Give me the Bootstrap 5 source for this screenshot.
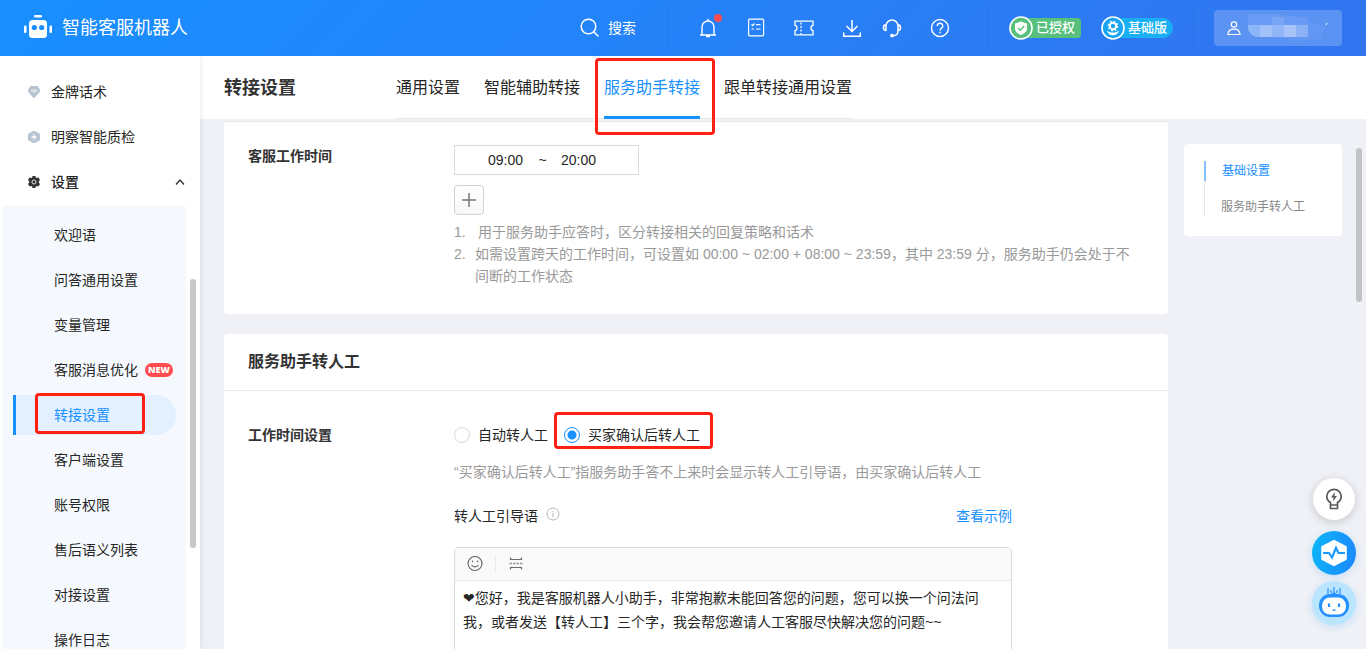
<!DOCTYPE html>
<html lang="zh-CN">
<head>
<meta charset="utf-8">
<meta name="viewport" content="width=device-width, initial-scale=1">
<title>智能客服机器人 - 转接设置</title>
<link href="https://cdn.jsdelivr.net/npm/bootstrap@5.3.0/dist/css/bootstrap.min.css" rel="stylesheet">
<style>
  body { font: 14px/22px "Liberation Sans", "Noto Sans CJK SC", sans-serif; color: #262626; background: #eff1f6; }
  a { color: inherit; text-decoration: none; }
  svg { display: block; flex: none; }
  .hl { position: relative; }
  .hl::after { content: ""; position: absolute; border: 3px solid #ff2012; border-radius: 4px; pointer-events: none; z-index: 5; }

  /* top bar */
  .topbar { height: 56px; background: linear-gradient(135deg, #188fff, #3274f0); color: #fff; padding: 0 24px; }
  .topbar .brand-name { font-size: 18px; line-height: 28px; }
  .topbar .vline { width: 1px; height: 40px; background: #2170dc; opacity: .6; }
  .icon-btn { border: 0; padding: 0; background: none; color: #fff; }
  .icon-btn .dot { position: absolute; top: -4px; right: -4px; width: 8px; height: 8px; border-radius: 50%; background: #ff4d4f; }
  .search-btn { margin-right: 31px; }
  .tools { gap: 28px; margin: 0 38px 0 30px; }
  .tools .tight { margin-right: -8px; }
  .account { gap: 20px; }
  .plan { height: 20px; width: 72px; font-size: 13px; font-weight: 500; line-height: 20px; }
  .plan svg { margin: -2px 3px -2px 0; }
  .plan-auth { background: #57c07c; border-radius: 12px 4px 4px 12px; }
  .plan-base { background: #18b0f2; border-radius: 12px; }
  .user-box { width: 128px; height: 36px; border: 0; border-radius: 4px; background: #5b93f3; padding: 0 12px; }

  /* side menu */
  .side { width: 200px; background: #fff; padding: 16px 14px 0 3px; box-shadow: 1px 0 6px rgba(0,0,0,.08); z-index: 2; }
  .side-item { height: 40px; margin-bottom: 5px; padding-left: 25px; gap: 11px; }
  .side-item.open { margin-bottom: 4px; font-weight: 500; }
  .sub { background: #f5f9fd; padding: 9px 10px 0; }
  .sub-item { height: 40px; margin-bottom: 5px; padding-left: 38px; border-left: 3px solid transparent; gap: 7px; }
  .sub-item.active { background: #e2f0ff; color: #1890ff; border-left-color: #1890ff; border-radius: 0 20px 20px 0; }
  .sub-item.hl::after { left: 19px; right: 31px; top: -2px; bottom: 1px; }
  .tag-new { width: 28px; height: 14px; border-radius: 7px; background: #ff4d4f; color: #fff; font: 800 9px/14px "Open Sans", sans-serif; }
  .thumb { position: absolute; width: 6px; border-radius: 3px; background: #c8c8c8; }
  .side .thumb { right: 4px; top: 223px; height: 269px; }
  .content .thumb { right: 4px; top: 29px; height: 154px; background: #c1c2c5; }

  /* page head */
  .page-head { height: 63px; background: #fff; padding: 0 24px; }
  .page-head h1 { width: 172px; font-size: 18px; line-height: 28px; font-weight: 700; margin: 0; color: #333; }
  .tabs { gap: 24px; font-size: 16px; border-bottom: 1px solid #e8e8e8; height: 63px; }
  .tabs a { line-height: 63px; height: 63px; border-bottom: 3px solid transparent; }
  .tabs a.active { color: #1890ff; border-bottom-color: #1890ff; }
  .tabs a.hl::after { left: -9px; right: -15px; top: 2px; bottom: -19px; }

  /* content */
  .content { min-height: 0; padding: 2px 24px 0; gap: 16px; }
  .panel { background: #fff; border-radius: 4px; }
  .panel-first { border-top: 1px solid #e8e8e8; border-radius: 0 0 4px 4px; padding: 23px 24px 27px; margin-bottom: 20px; }
  .panel-title { font-size: 16px; line-height: 24px; font-weight: 700; padding: 16px 24px; margin: 0; border-bottom: 1px solid #e8e8e8; color: #333; }
  .field-name { width: 206px; flex: none; font-weight: 700; color: #333; }
  .time-range { width: 185px; height: 30px; border: 1px solid #d9d9d9; padding-left: 33px; }
  .time-range input { width: 36px; border: 0; padding: 0; height: 22px; background: none; color: #262626; }
  .time-range span { width: 37px; text-align: center; }
  .add-btn { width: 30px; height: 30px; border: 1px solid #d2d2d2; border-radius: 4px; padding: 0; background: linear-gradient(#fff, #f7f7f7); color: #777; margin: 10px 0 6px; }
  .notes { color: #999; max-width: 682px; padding-left: 21px; margin: 0; list-style: none; counter-reset: n; }
  .notes li { counter-increment: n; }
  .notes li::before { content: counter(n) "."; display: inline-block; width: 21px; margin-left: -21px; }
  .notes li:first-child::before { width: 24px; }
  .form-body { padding: 33px 24px 0; }
  .pick { gap: 8px; }
  .pick input { appearance: none; width: 16px; height: 16px; margin: 0; border: 1px solid #d9d9d9; border-radius: 50%; background: #fff; }
  .pick input:checked { border-color: #1890ff; background: radial-gradient(circle, #1890ff 4px, #fff 5px); }
  .pick.hl::after { left: -10px; right: -13px; top: -12px; bottom: -3px; }
  .hint { color: #999; margin: 15px 0 22px; }
  .editor-col { max-width: 558px; }
  .editor { border: 1px solid #d9d9d9; border-radius: 4px; margin-top: 20px; }
  .editor-bar { height: 33px; background: #fafafa; border-bottom: 1px solid #e8e8e8; padding: 0 12px; color: #6b6b6b; gap: 12px; }
  .editor-bar .sep { width: 1px; height: 18px; background: #e8e8e8; }
  .editor textarea { display: block; width: 100%; height: 120px; border: 0; padding: 5px 24px 5px 8px; line-height: 24px; resize: none; overflow: hidden; color: #262626; font-family: "Liberation Sans", "DejaVu Sans", "Noto Sans CJK SC", sans-serif; }
  .link-blue { color: #1890ff; }

  /* anchors and floating buttons */
  .anchors { width: 158px; flex: none; margin-top: 23px; padding: 17px 20px 20px; font-size: 12px; }
  .anchors nav { border-left: 1px solid #e8e8e8; }
  .anchors a { display: block; height: 19px; line-height: 20px; padding-left: 16px; color: #888; }
  .anchors a.active { height: 20px; color: #1890ff; border-left: 2px solid #85c1ff; margin: 0 0 16px -1px; }
  .floats { position: fixed; right: 10px; bottom: 24px; z-index: 4; gap: 6px; }
  .floats button { width: 44px; height: 44px; border: 0; padding: 0; border-radius: 50%; }
  .floats .f-tip { width: 42px; height: 42px; margin-bottom: 5px; background: #fff; color: #595959; box-shadow: 0 2px 10px rgba(0,0,0,.18); }
  .floats .f-pulse { background: linear-gradient(100deg, #0cb6f7, #1c87ff); box-shadow: 0 2px 8px rgba(24,144,255,.2); }
  .floats .f-bot { background: #bae5ff; box-shadow: 0 2px 8px rgba(24,144,255,.2); }
</style>
</head>
<body>
<div class="d-flex flex-column vh-100 overflow-hidden">

  <header class="topbar d-flex align-items-center flex-shrink-0">
    <a href="#" class="d-flex align-items-center me-auto">
      <svg class="me-2" width="30" height="28" viewBox="0 0 30 28" fill="#fff"><rect x="10" y="1" width="8" height="2.500" rx="1.200"/><rect x="5" y="6" width="18" height="18" rx="3.500"/><rect x="0" y="11.500" width="2.500" height="7.500" rx="1"/><rect x="25.500" y="11.500" width="2.500" height="7.500" rx="1"/><circle cx="10.300" cy="13.500" r="2.600" fill="#1b8dff"/><circle cx="17.700" cy="13.500" r="2.600" fill="#1b8dff"/></svg>
      <span class="brand-name">智能客服机器人</span>
    </a>
    <button type="button" class="icon-btn search-btn d-flex align-items-center gap-2">
      <svg width="20" height="20" viewBox="0 0 20 20" fill="none" stroke="#fff" stroke-width="1.500"><circle cx="8.500" cy="8.500" r="7.300"/><path d="M14 14l4.500 4.500"/></svg>搜索
    </button>
    <span class="vline"></span>
    <div class="tools d-flex align-items-center">
      <button type="button" class="icon-btn position-relative" aria-label="通知"><svg width="20" height="20" viewBox="0 0 20 20" fill="none" stroke="currentColor" stroke-width="1.400"><path d="M2 17h16M4 17V9a6 6 0 0 1 12 0v8M10 3V1M8 18.500h4"/></svg><span class="dot"></span></button>
      <button type="button" class="icon-btn" aria-label="任务"><svg width="20" height="20" viewBox="0 0 20 20" fill="none" stroke="currentColor" stroke-width="1.200"><rect x="2.600" y="1.200" width="15" height="16.600" rx="1"/><path d="M5.500 6.500l1.200 1.200L8.500 5.500M10 6.700h4.500M5.500 11H8M10 11h4.500"/></svg></button>
      <button type="button" class="icon-btn" aria-label="卡券"><svg width="20" height="20" viewBox="0 0 20 20" fill="none" stroke="currentColor" stroke-width="1.300"><path d="M1 3.200h18v4.200q-2 .3-2 2.600t2 2.600v4.200H1v-4.200q2-.3 2-2.600T1 7.400z"/><path d="M7 4.500v12" stroke-dasharray="2 1.500"/></svg></button>
      <button type="button" class="icon-btn tight" aria-label="下载"><svg width="20" height="20" viewBox="0 0 20 20" fill="none" stroke="currentColor" stroke-width="1.500"><path d="M10 2v11M4.500 8L10 13.500 15.500 8M1.700 14.500v3.800h16.600v-3.800"/></svg></button>
      <button type="button" class="icon-btn" aria-label="客服"><svg width="20" height="20" viewBox="0 0 20 20" fill="none" stroke="currentColor" stroke-width="1.500"><path d="M4 13V8a6 6 0 0 1 12 0v5c0 3-2 4.700-5 4.700M4 6.800C2 6.800 1.500 8 1.500 9.500S2 12.500 4 12.500M16 6.800c2 0 2.500 1.200 2.500 2.700s-.5 3-2.500 3"/><circle cx="10" cy="17.600" r="1.200" fill="currentColor"/></svg></button>
      <button type="button" class="icon-btn" aria-label="帮助"><svg width="20" height="20" viewBox="0 0 20 20" fill="none" stroke="currentColor" stroke-width="1.400"><circle cx="10" cy="10" r="8.500"/><path d="M7.300 8a2.700 2.700 0 1 1 4 2.300c-.9.600-1.300 1-1.300 2.200M10 13.800v1.500"/></svg></button>
    </div>
    <div class="account d-flex align-items-center">
      <span class="vline"></span>
      <span class="plan plan-auth d-flex align-items-center"><svg width="24" height="24" viewBox="0 0 24 24"><circle cx="12" cy="12" r="11" fill="#57c07c" stroke="#fff" stroke-width="1.600"/><path d="M12 5.500l6 2v5c0 3-2.500 5-6 6.500-3.500-1.500-6-3.500-6-6.500v-5z" fill="#fff"/><path d="M9 12l2.200 2.200L15.300 10" fill="none" stroke="#57c07c" stroke-width="1.500"/></svg>已授权</span>
      <span class="plan plan-base d-flex align-items-center"><svg width="24" height="24" viewBox="0 0 24 24"><circle cx="12" cy="12" r="11" fill="#18a5f2" stroke="#fff" stroke-width="1.600"/><circle cx="12" cy="10" r="3.200" fill="none" stroke="#fff" stroke-width="2"/><circle cx="12" cy="10" r="4.700" fill="none" stroke="#fff" stroke-width="1.400" stroke-dasharray="1.850 1.840"/><path d="M6 14.500c2 1.700 4 2 6 2s4-.3 6-2c-.5 3-3 4.700-6 4.700s-5.500-1.700-6-4.700z" fill="#fff"/></svg>基础版</span>
      <span class="vline"></span>
      <button type="button" class="user-box d-flex align-items-center" aria-label="账户">
        <svg width="104" height="30" viewBox="0 0 104 30"><g fill="none" stroke="#fff" stroke-width="1.200"><circle cx="8" cy="11.500" r="2.700"/><path d="M2 21.500c0-3.500 2.500-5.300 6-5.300s6 1.800 6 5.300z"/></g><path d="M22 1h26l34 4v18H30q-8-2-8-9z" fill="#699af4"/><path d="M22 12h12v12h-4q-8-3-8-9z" fill="#8db6f8"/><path d="M34 12h12v12H34z" fill="#a1c1fa"/><path d="M46 4h12v8H46z" fill="#79a5f5"/><path d="M46 12h12v12H46z" fill="#91b6f8"/><path d="M58 12h12v12H58z" fill="#a7c3fa"/><path d="M70 12h12v12H70z" fill="#8cb1f7"/><path d="M82 8l18 5-6 13-24 2-20-4h32z" fill="#6397f4"/><path d="M100 12l1-2" stroke="#fff"/></svg>
      </button>
    </div>
  </header>

  <div class="d-flex flex-grow-1 overflow-hidden">
    <aside class="side flex-shrink-0 position-relative">
      <a href="#" class="side-item d-flex align-items-center"><svg width="12" height="12" viewBox="0 0 12 12"><path d="M2.500 0h7L12 3.500v2.300L7 11.400q-1 1-2 0L0 5.800V3.500z" fill="#b9c4d3"/><path d="M4 3.500v2.500M6 3v3.500M8 3.500v2.500" stroke="#fff"/></svg>金牌话术</a>
      <a href="#" class="side-item d-flex align-items-center"><svg width="12" height="12" viewBox="0 0 12 12"><path d="M6 0l5.500 3v6L6 12 .5 9V3z" fill="#b9c4d3" stroke="#b9c4d3" stroke-linejoin="round"/><path d="M3.500 6h5M6 3.500v5" stroke="#fff" stroke-width="1.300"/></svg>明察智能质检</a>
      <a href="#" class="side-item open d-flex align-items-center"><svg width="12" height="12" viewBox="0 0 12 12"><path d="M4.600 0h2.800l.6 1.900 2.300-.4L12 3.800 10.600 6 12 8.200l-1.700 2.300L8 10.100 7.400 12H4.600L4 10.100l-2.300.4L0 8.200 1.400 6 0 3.800l1.700-2.300 2.300.4z" fill="#333"/><circle cx="6" cy="6" r="2" fill="none" stroke="#ddd"/></svg>设置<svg class="ms-auto" width="12" height="12" viewBox="0 0 12 12" fill="none" stroke="#333" stroke-width="1.400"><path d="M2 8.500l4-4.500 4 4.500"/></svg></a>
      <nav class="sub">
        <a href="#" class="sub-item d-flex align-items-center">欢迎语</a>
        <a href="#" class="sub-item d-flex align-items-center">问答通用设置</a>
        <a href="#" class="sub-item d-flex align-items-center">变量管理</a>
        <a href="#" class="sub-item d-flex align-items-center">客服消息优化<span class="tag-new text-center">NEW</span></a>
        <a href="#" class="sub-item active hl d-flex align-items-center">转接设置</a>
        <a href="#" class="sub-item d-flex align-items-center">客户端设置</a>
        <a href="#" class="sub-item d-flex align-items-center">账号权限</a>
        <a href="#" class="sub-item d-flex align-items-center">售后语义列表</a>
        <a href="#" class="sub-item d-flex align-items-center">对接设置</a>
        <a href="#" class="sub-item d-flex align-items-center">操作日志</a>
      </nav>
      <span class="thumb"></span>
    </aside>

    <main class="d-flex flex-column flex-grow-1 overflow-hidden">
      <div class="page-head d-flex align-items-center flex-shrink-0">
        <h1>转接设置</h1>
        <nav class="tabs d-flex">
          <a href="#">通用设置</a>
          <a href="#">智能辅助转接</a>
          <a href="#" class="active hl">服务助手转接</a>
          <a href="#">跟单转接通用设置</a>
        </nav>
      </div>

      <div class="content d-flex flex-grow-1 position-relative">
        <div class="flex-grow-1">
          <section class="panel panel-first d-flex">
            <div class="field-name">客服工作时间</div>
            <div class="flex-grow-1">
              <div class="time-range d-flex align-items-center">
                <input type="text" value="09:00" aria-label="开始时间"><span>~</span><input type="text" value="20:00" aria-label="结束时间">
              </div>
              <button type="button" class="add-btn d-flex align-items-center justify-content-center" aria-label="添加时间段"><svg width="14" height="14" viewBox="0 0 14 14" stroke="currentColor" stroke-width="1.500"><path d="M0 7h14M7 0v14"/></svg></button>
              <ol class="notes">
                <li>用于服务助手应答时，区分转接相关的回复策略和话术</li>
                <li>如需设置跨天的工作时间，可设置如 00:00 ~ 02:00 + 08:00 ~ 23:59，其中 23:59 分，服务助手仍会处于不间断的工作状态</li>
              </ol>
            </div>
          </section>

          <section class="panel">
            <h2 class="panel-title">服务助手转人工</h2>
            <div class="form-body d-flex">
              <div class="field-name">工作时间设置</div>
              <div class="flex-grow-1">
                <div class="d-flex gap-3">
                  <label class="pick d-flex align-items-center"><input type="radio" name="mode">自动转人工</label>
                  <label class="pick hl d-flex align-items-center"><input type="radio" name="mode" checked>买家确认后转人工</label>
                </div>
                <p class="hint">“买家确认后转人工”指服务助手答不上来时会显示转人工引导语，由买家确认后转人工</p>
                <div class="editor-col">
                  <div class="d-flex align-items-center">
                    <label for="guide">转人工引导语</label>
                    <svg class="ms-2 mb-1" width="14" height="14" viewBox="0 0 14 14" fill="none" stroke="#b5b5b5"><circle cx="7" cy="7" r="6"/><path d="M7 6v4.500M7 3.500v1.300"/></svg>
                    <a href="#" class="link-blue ms-auto">查看示例</a>
                  </div>
                  <div class="editor">
                    <div class="editor-bar d-flex align-items-center">
                      <button type="button" class="icon-btn text-reset" aria-label="表情"><svg width="16" height="16" viewBox="0 0 16 16" fill="none" stroke="currentColor" stroke-width="1.200"><circle cx="8" cy="7.500" r="7"/><path d="M4.500 9c1.500 2.500 5.500 2.500 7 0M5.500 4.500v1.800M10.500 4.500v1.800"/></svg></button>
                      <span class="sep"></span>
                      <button type="button" class="icon-btn text-reset" aria-label="分割"><svg width="16" height="16" viewBox="0 0 16 16" fill="none" stroke="currentColor" stroke-width="1.200"><path d="M2.500 1.500v2h11v-2M2.500 13.500v-2h11v2"/><path d="M1.500 7.500h13" stroke-dasharray="2.500 1" stroke="#999" stroke-width="1.500"/></svg></button>
                    </div>
                    <textarea id="guide">❤您好，我是客服机器人小助手，非常抱歉未能回答您的问题，您可以换一个问法问我，或者发送【转人工】三个字，我会帮您邀请人工客服尽快解决您的问题~~</textarea>
                  </div>
                </div>
              </div>
            </div>
          </section>
        </div>

        <aside class="panel anchors align-self-start">
          <nav>
            <a href="#" class="active">基础设置</a>
            <a href="#">服务助手转人工</a>
          </nav>
        </aside>
        <span class="thumb"></span>
      </div>
    </main>
  </div>
</div>

<div class="floats d-flex flex-column align-items-center">
  <button type="button" class="f-tip d-flex align-items-center justify-content-center" aria-label="建议"><svg width="18" height="22" viewBox="0 0 18 22" fill="none" stroke="currentColor" stroke-width="1.700"><path d="M5.500 17v-2.500C3 13 1.800 11 1.800 8.500a7.200 7.200 0 0 1 14.400 0c0 2.500-1.200 4.500-3.700 6V17zM5.500 17v3.500h7V17"/><path d="M10 4L6 9.500h2.500L8 13.500l4-5.500H9.500z" fill="currentColor" stroke="none"/></svg></button>
  <button type="button" class="f-pulse d-flex align-items-center justify-content-center" aria-label="诊断"><svg width="28" height="28" viewBox="0 0 28 28"><path d="M14 2l11.500 6v12L14 26 2.500 20V8z" fill="#fff" stroke="#fff" stroke-width="2.500" stroke-linejoin="round"/><path d="M3 14h6l3 4.500 4-9.500 2.500 5H25" fill="none" stroke="#1c9bff" stroke-width="2.200"/></svg></button>
  <button type="button" class="f-bot d-flex align-items-center justify-content-center" aria-label="助手"><svg width="32" height="34" viewBox="0 0 32 34"><g stroke="#2590ff" stroke-width="1.200"><path d="M10 2v6M13 4v3M22 2v6M19 4v3M16 1v8"/></g><path d="M12 9q4-5 8 0z" fill="#2590ff"/><rect x="1" y="8" width="30" height="23" rx="11" fill="#2590ff"/><rect x="4" y="11.500" width="24" height="17" rx="8" fill="#fff"/><path d="M11 17.500v3.500M21 17.500v3.500" stroke="#2590ff" stroke-width="2.200"/><path d="M14 23.500q2 3 4 0z" fill="#2590ff"/></svg></button>
</div>
<script src="https://cdn.jsdelivr.net/npm/bootstrap@5.3.0/dist/js/bootstrap.bundle.min.js"></script>
</body>
</html>
